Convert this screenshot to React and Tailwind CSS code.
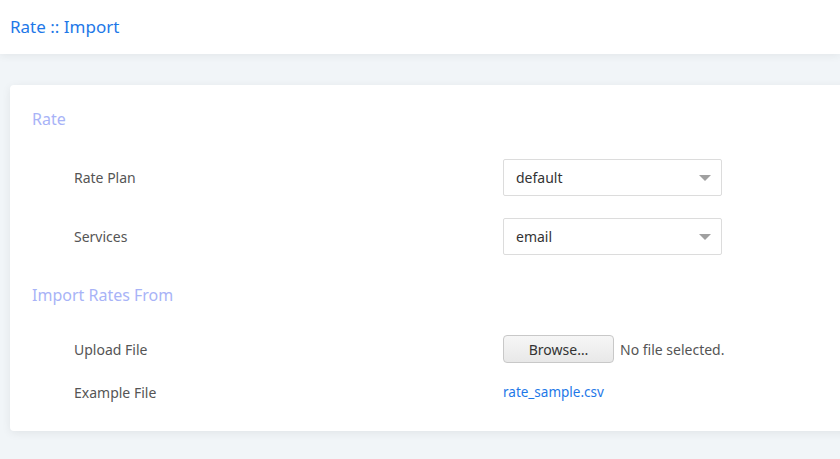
const FONT = { fontFamily: '"Noto Sans", "Open Sans", sans-serif' }

function SelectBox({ value }) {
  return (
    <div className="w-[219px] h-[37px] border border-[#dcdcdc] rounded-[2px] bg-white flex items-center justify-between pl-[12px] pr-[10px]">
      <span className="text-[14px] text-[#333]">{value}</span>
      <svg width="12" height="6" viewBox="0 0 12 6">
        <path d="M0 0h12L6 6z" fill="#a0a0a0" />
      </svg>
    </div>
  )
}

function Row({ label, children, h = 'h-[59px]' }) {
  return (
    <div className={`flex items-center ${h}`}>
      <div className="w-[493px] pl-[64px] text-[14px] text-[#555]">{label}</div>
      <div className="flex items-center">{children}</div>
    </div>
  )
}

export default function App() {
  return (
    <div className="w-[840px] h-[459px] overflow-hidden bg-[#f1f5f8]" style={FONT}>
      {/* Header */}
      <div className="h-[54px] bg-white flex items-center pl-[10px] shadow-[0_2px_8px_rgba(0,0,0,0.06)] relative">
        <span className="text-[17px] text-[#1e78e8]">Rate :: Import</span>
      </div>

      <div className="pl-[10px] pt-[31px]">
        <div className="w-[860px] h-[346px] bg-white rounded-[4px] shadow-[0_2px_10px_rgba(0,0,0,0.07)] pt-[21px]">
          <div className="pl-[22px] text-[16px] text-[#a8b3f7] h-[26px] flex items-center">Rate</div>
          <div className="pt-[16px]">
            <Row label="Rate Plan"><SelectBox value="default" /></Row>
            <Row label="Services"><SelectBox value="email" /></Row>
          </div>
          <div className="pl-[22px] text-[16px] text-[#a8b3f7] h-[26px] flex items-center mt-[16px]">Import Rates From</div>
          <div className="pt-[24px]">
            <Row label="Upload File" h="h-[34px]">
              <button className="w-[111px] h-[28px] border border-[#c8c8c8] rounded-[4px] bg-gradient-to-b from-[#f6f6f6] to-[#e8e8e8] text-[14px] text-[#333]">
                Browse…
              </button>
              <span className="ml-[6px] text-[14px] text-[#555]">No file selected.</span>
            </Row>
            <Row label="Example File" h="h-[52px]">
              <span className="text-[13.5px] text-[#1e78e8]">rate_sample.csv</span>
            </Row>
          </div>
        </div>
      </div>
    </div>
  )
}
